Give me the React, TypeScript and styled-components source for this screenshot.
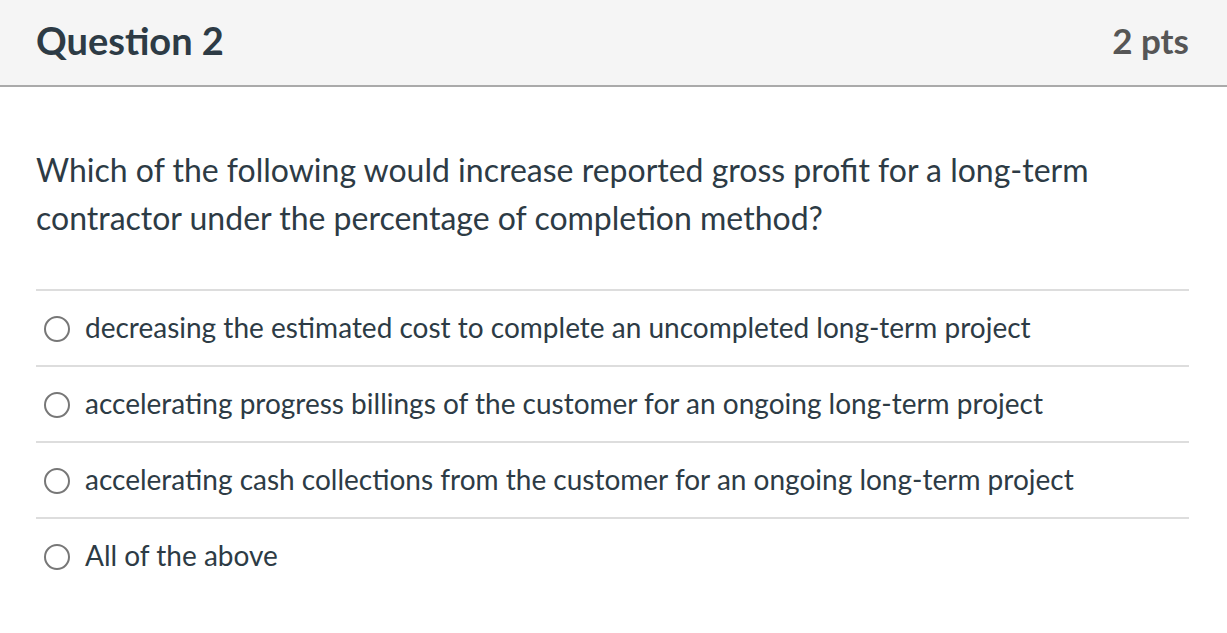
import React from 'react';
import styled, { createGlobalStyle } from 'styled-components';

const GlobalStyle = createGlobalStyle`
  html, body {
    margin: 0;
    padding: 0;
    background: #ffffff;
    font-family: Lato, "Noto Sans", "Liberation Sans", sans-serif;
    color: #2d3b45;
  }
`;

const Card = styled.div`
  width: 1227px;
  background: #ffffff;
`;

const Header = styled.div`
  display: flex;
  align-items: center;
  justify-content: space-between;
  height: 87px;
  padding: 0 38px 5px 36px;
  background: #f5f5f5;
  border-bottom: 2px solid #aaaaaa;
  box-sizing: border-box;
`;

const Title = styled.h2`
  margin: 0;
  font-size: 38px;
  line-height: 1;
  font-weight: 700;
  color: #2d3b45;
`;

const Points = styled.div`
  font-size: 35px;
  line-height: 1;
  font-weight: 700;
  color: #565656;
`;

const Body = styled.div`
  padding: 59px 38px 0 36px;
`;

const QuestionText = styled.p`
  margin: 0 0 47px;
  font-size: 32px;
  line-height: 48px;
`;

const Answers = styled.div`
  display: flex;
  flex-direction: column;
`;

const Answer = styled.label`
  display: flex;
  align-items: center;
  gap: 15px;
  height: 76px;
  padding: 0 0 3px 8px;
  border-top: 2px solid #dddddd;
  box-sizing: border-box;
  font-size: 28px;
  color: #2d3b45;
  cursor: pointer;
`;

const Radio = styled.span`
  width: 26px;
  height: 26px;
  margin-top: 4px;
  border: 2px solid #777777;
  border-radius: 50%;
  box-sizing: border-box;
  flex-shrink: 0;
`;

const answers = [
  'decreasing the estimated cost to complete an uncompleted long-term project',
  'accelerating progress billings of the customer for an ongoing long-term project',
  'accelerating cash collections from the customer for an ongoing long-term project',
  'All of the above',
];

export default function App() {
  return (
    <>
      <GlobalStyle />
      <Card>
        <Header>
          <Title>Question 2</Title>
          <Points>2 pts</Points>
        </Header>
        <Body>
          <QuestionText>
            Which of the following would increase reported gross profit for a long-term
            <br />
            contractor under the percentage of completion method?
          </QuestionText>
          <Answers>
            {answers.map((a) => (
              <Answer key={a}>
                <Radio />
                {a}
              </Answer>
            ))}
          </Answers>
        </Body>
      </Card>
    </>
  );
}
